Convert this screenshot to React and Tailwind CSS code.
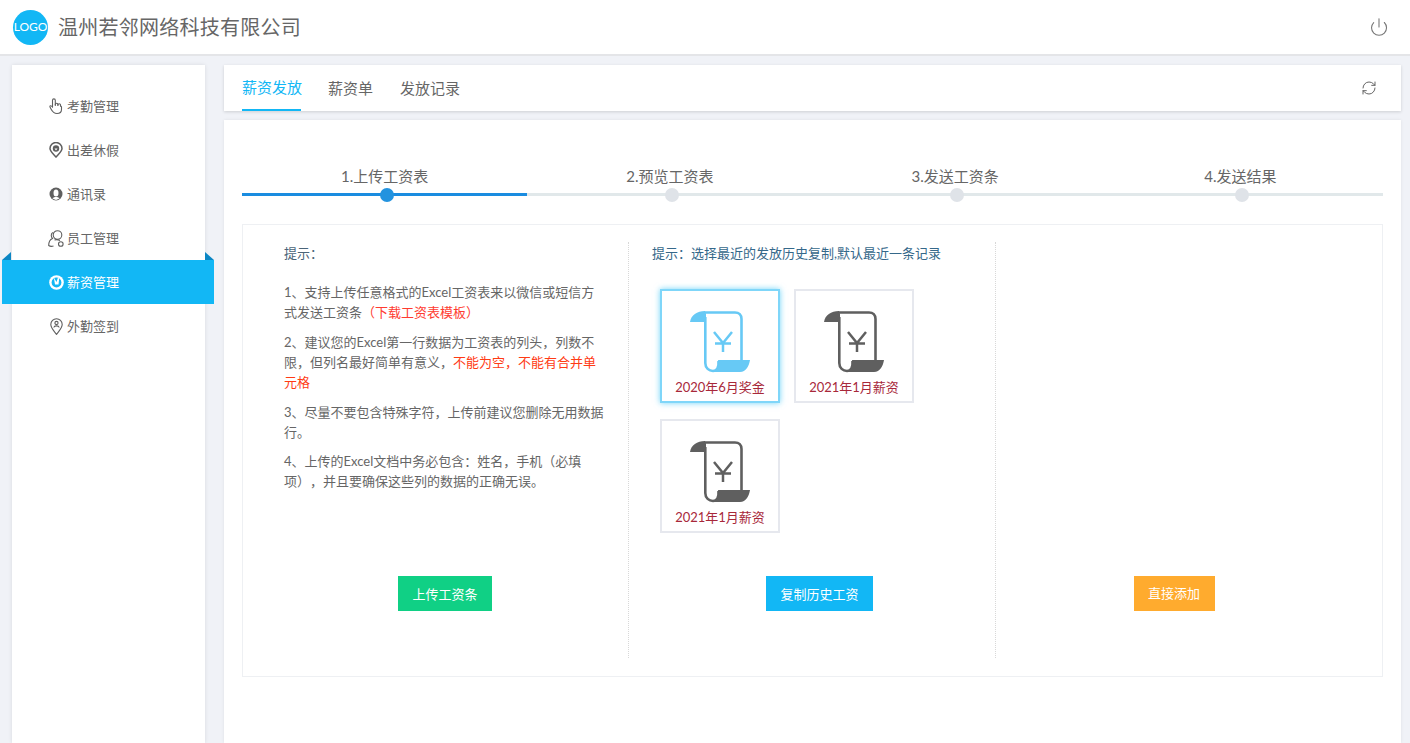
import React from "react";
import { Power, RefreshCw } from "lucide-react";

const FONT = "font-['Lato','Noto_Sans_CJK_SC',sans-serif] [text-spacing-trim:space-all]";

function ScrollIcon({ color }) {
  return (
    <svg width="60" height="62" viewBox="0 0 60 62" fill="none">
      <path d="M14 1.500H45C49 1.500 51.500 4 51.500 8V49" stroke={color} strokeWidth="2.600" />
      <path d="M15.300 6V52C15.300 57 19 60 23 60C27 60 29 56 28.500 50" stroke={color} strokeWidth="2.600" />
      <path d="M15 0C7 0 1 4 0 11H16V3Z" fill={color} />
      <path d="M28 49H60C59 55 56 61 50 61H24C27 59 29 54 28 49Z" fill={color} />
      <path d="M24 21L33 32L42 21M33 32V41M25 32.500H41" stroke={color} strokeWidth="2.500" />
    </svg>
  );
}

function HandIcon() {
  return (
    <svg width="14" height="17" viewBox="0 0 14 17" fill="none" stroke="currentColor" strokeWidth="1.100" strokeLinecap="round" strokeLinejoin="round">
      <path d="M3.500 9V2.300a1.400 1.400 0 0 1 2.800 0V7.500" />
      <path d="M6.300 6.500a1.300 1.300 0 0 1 2.600 0v1" />
      <path d="M8.900 7a1.300 1.300 0 0 1 2.600 0V8" />
      <path d="M11.500 8a1.200 1.200 0 0 1 1 1.500v2C12.500 14 10.500 15.500 8 15.500C5 15.500 3.500 14 2 11L1 9C.6 7.500 2 7 3.500 9" />
    </svg>
  );
}

function PinDown() {
  return (
    <svg width="14" height="16" viewBox="0 0 14 16" fill="none">
      <path d="M7 15C4 11.500 1 9.500 1 6.500A6 6 0 0 1 13 6.500C13 9.500 10 11.500 7 15Z" stroke="currentColor" strokeWidth="1.500" />
      <circle cx="7" cy="6.500" r="3.200" fill="currentColor" />
      <path d="M5.500 6.500L7 8.500L8.500 6.500Z" fill="#fff" />
    </svg>
  );
}

function PersonBadge() {
  return (
    <svg width="14" height="14" viewBox="0 0 14 14">
      <circle cx="7" cy="7" r="6.500" fill="currentColor" />
      <ellipse cx="7" cy="6" rx="2.500" ry="3.500" fill="#fff" />
      <path d="M3.500 11.500C4.500 9.500 9.500 9.500 10.500 11.500L7 13Z" fill="#fff" />
    </svg>
  );
}

function TwoPeople() {
  return (
    <svg width="16" height="17" viewBox="0 0 16 17" fill="none" stroke="currentColor" strokeWidth="1.100">
      <circle cx="9.500" cy="5" r="4.300" />
      <path d="M5 2.500C2.500 3.500 3 7 4.500 8.500C2 9.500 .7 12 .7 15.500C2 16.500 4 16.500 5.500 16" />
      <path d="M6.500 10C8 9.500 10 9.500 12 10.500" />
      <circle cx="12.800" cy="14" r="2.300" />
    </svg>
  );
}

function MoneyBadge() {
  return (
    <svg width="15" height="15" viewBox="0 0 15 15">
      <circle cx="7.500" cy="7.500" r="7.300" fill="#fff" />
      <circle cx="7.500" cy="7.500" r="4.900" fill="#12b7f5" />
      <path d="M4.800 2.500L7.500 7L9 2.500L10.200 3.500L9.500 9.500H6Z" fill="#fff" />
    </svg>
  );
}

function PinPerson() {
  return (
    <svg width="13" height="17" viewBox="0 0 13 17" fill="none" stroke="currentColor" strokeWidth="1.100">
      <path d="M6.500 16.300C3.700 12.500 .8 10 .8 6.500A5.700 5.700 0 0 1 12.200 6.500C12.200 10 9.300 12.500 6.500 16.300Z" />
      <circle cx="6.500" cy="5" r="1.600" />
      <path d="M3.800 9.500C4.300 7.300 8.700 7.300 9.200 9.500" />
    </svg>
  );
}

const nav = [
  { label: "考勤管理", icon: <HandIcon /> },
  { label: "出差休假", icon: <PinDown /> },
  { label: "通讯录", icon: <PersonBadge /> },
  { label: "员工管理", icon: <TwoPeople /> },
  { label: "薪资管理", icon: <MoneyBadge />, active: true },
  { label: "外勤签到", icon: <PinPerson /> },
];

function NavItem({ item }) {
  if (item.active) {
    return (
      <div className="relative -mx-[10px] w-[212px] h-[44px] flex items-center bg-[#12b7f5] text-white text-[13px] pl-[46px] gap-[3px]">
        <span className="absolute left-0 -top-[8px] w-[9px] h-[8px] bg-[#0b86c4] [clip-path:polygon(100%_0,100%_100%,0_100%)]" />
        <span className="absolute right-0 -top-[8px] w-[9px] h-[8px] bg-[#0b86c4] [clip-path:polygon(0_0,100%_100%,0_100%)]" />
        <span className="w-[16px] flex justify-center">{item.icon}</span>
        <span className="pt-[1px]">{item.label}</span>
      </div>
    );
  }
  return (
    <div className="h-[44px] flex items-center text-[#666] text-[13px] pl-[36px] gap-[3px]">
      <span className="w-[16px] flex justify-center text-[#5f5f5f]">{item.icon}</span>
      <span className="pt-[1px]">{item.label}</span>
    </div>
  );
}

const steps = ["1.上传工资表", "2.预览工资表", "3.发送工资条", "4.发送结果"];

function Step({ label, active }) {
  return (
    <div className="flex-1 flex flex-col items-center">
      <div className="text-[15px] leading-[20px] text-[#666] h-[27px]">{label}</div>
      <div className="relative w-full h-[3px] flex items-center justify-center">
        <div className={"w-full h-[3px] " + (active ? "bg-[#1a8ce0]" : "bg-[#e1e8ea]")} />
        <div className={"absolute translate-x-[2px] rounded-full w-[14px] h-[14px] " + (active ? "bg-[#2393df]" : "bg-[#dfe3e8]")} />
      </div>
    </div>
  );
}

function HistoryCard({ label, active }) {
  const color = active ? "#67c9f5" : "#5f5f5f";
  return (
    <div
      className={
        "w-[120px] h-[114px] bg-white border-2 flex flex-col items-center pt-[20px] " +
        (active ? "border-[#7fd6f9] shadow-[0_0_6px_rgba(18,183,245,0.6)]" : "border-[#e6e8ee]")
      }
    >
      <ScrollIcon color={color} />
      <div className="mt-[4px] text-[13px] leading-[20px] text-[#a8283a]">{label}</div>
    </div>
  );
}

function ActionButton({ label, className }) {
  return (
    <div className="mt-auto mb-[47px] flex justify-center">
      <div className={"h-[35px] flex items-center justify-center text-white text-[13px] " + className}>{label}</div>
    </div>
  );
}

export default function App() {
  return (
    <div className={"h-[743px] overflow-hidden bg-[#f0f2f7] flex flex-col " + FONT}>
      <header className="h-[56px] shrink-0 bg-white border-b-2 border-[#e4e5e8] flex items-center pl-[13px] pr-[21px]">
        <div className="w-[35px] h-[35px] rounded-full bg-[#12b7f5] text-white text-[12px] flex items-center justify-center">
          LOGO
        </div>
        <div className="ml-[10px] text-[20px] tracking-[0.25px] text-[#666]">温州若邻网络科技有限公司</div>
        <Power size={20} strokeWidth={1.300} className="ml-auto text-[#777]" />
      </header>

      <div className="flex-1 flex pt-[9px] pl-[12px] pr-[9px] gap-[19px] min-h-0">
        <aside className="w-[193px] shrink-0 bg-white shadow-[0_0_4px_rgba(0,0,0,0.1)] pt-[19px]">
          {nav.map((item) => (
            <NavItem key={item.label} item={item} />
          ))}
        </aside>

        <main className="flex-1 flex flex-col gap-[9px] min-w-0">
          <div className="h-[46px] shrink-0 bg-white shadow-[0_1px_3px_rgba(0,0,0,0.15)] flex items-stretch pl-[18px] pr-[24px] gap-[27px] text-[15px] text-[#666]">
            <div className="w-[59px] whitespace-nowrap flex items-center text-[#12b7f5] border-b-2 border-[#12b7f5]">薪资发放</div>
            <div className="flex items-center">薪资单</div>
            <div className="flex items-center">发放记录</div>
            <div className="ml-auto flex items-center">
              <RefreshCw size={16} strokeWidth={1.500} className="text-[#666]" />
            </div>
          </div>

          <div className="flex-1 bg-white shadow-[0_0_3px_rgba(0,0,0,0.08)] px-[18px] pt-[46px]">
            <div className="flex">
              {steps.map((s, i) => (
                <Step key={s} label={s} active={i === 0} />
              ))}
            </div>

            <div className="mt-[28px] h-[453px] border border-[#eef0f3] pt-[17px] pb-[18px] flex">
              <section className="w-[386px] shrink-0 border-r border-dotted border-r-[#d8d8d8] pl-[41px] pr-[24px] flex flex-col text-[13px] leading-[20px] text-[#666]">
                <div className="text-[#4a6478] mt-[1px]">提示：</div>
                <div className="mt-[19px] flex flex-col gap-[10px]">
                  <p>
                    1、支持上传任意格式的Excel工资表来以微信或短信方式发送工资条<span className="text-[#ff3b30]">（下载工资表模板）</span>
                  </p>
                  <p>
                    2、建议您的Excel第一行数据为工资表的列头，列数不限，但列名最好简单有意义，<span className="text-[#ff3b14]">不能为空，不能有合并单元格</span>
                  </p>
                  <p>3、尽量不要包含特殊字符，上传前建议您删除无用数据行。</p>
                  <p className="-mt-[1px]">4、上传的Excel文档中务必包含：姓名，手机（必填项），并且要确保这些列的数据的正确无误。</p>
                </div>
                <ActionButton label="上传工资条" className="w-[94px] translate-x-[1px] bg-[#10d085]" />
              </section>

              <section className="w-[367px] shrink-0 border-r border-dotted border-r-[#d8d8d8] pl-[23px] pr-[8px] flex flex-col text-[13px] leading-[20px]">
                <div className="text-[#35688a] mt-[1px]">提示：选择最近的发放历史复制,默认最近一条记录</div>
                <div className="mt-[26px] pl-[8px] flex flex-wrap gap-x-[14px] gap-y-[16px]">
                  <HistoryCard label="2020年6月奖金" active />
                  <HistoryCard label="2021年1月薪资" />
                  <HistoryCard label="2021年1月薪资" />
                </div>
                <ActionButton label="复制历史工资" className="w-[107px] bg-[#12b7f5]" />
              </section>

              <section className="flex-1 pr-[30px] flex flex-col text-[13px]">
                <ActionButton label="直接添加" className="w-[81px] bg-[#ffab2e]" />
              </section>
            </div>
          </div>
        </main>
      </div>
    </div>
  );
}
